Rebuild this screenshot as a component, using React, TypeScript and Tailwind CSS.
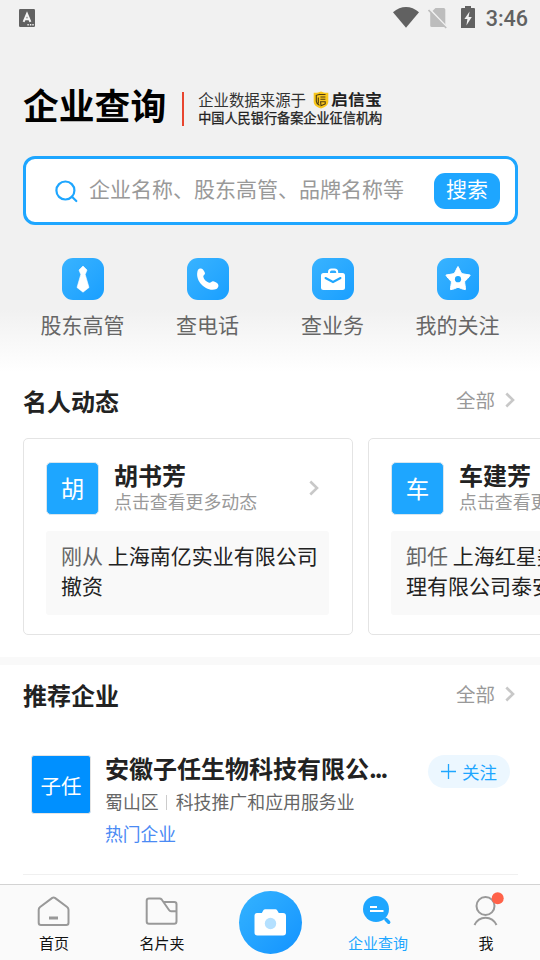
import type { ReactNode } from "react";

const BLUE = "#1ea6ff";

function StatusBar() {
  return (
    <div className="flex h-9 items-start justify-between pl-[19px] pr-3">
      <svg className="mt-[9px]" width="16" height="18" viewBox="0 0 16 18">
        <rect width="16" height="18" rx="1.2" fill="#616161" />
        <path d="M4.6 12.8 8 4.8l3.4 8M5.8 10.2h4.4" fill="none" stroke="#f4f4f4" strokeWidth="2" />
        <path d="M8.4 15h1.4v1.6H8.4zM10.9 15h1.4v1.6h-1.4zM13.3 15h1.4v1.6h-1.4z" fill="#f4f4f4" />
      </svg>
      <div className="flex items-start">
        <svg className="mt-[7px]" width="26" height="21" viewBox="0 0 26 21">
          <path d="M0 5.2C8-1.700 18-1.700 26 5.200L13 20.700z" fill="#616161" />
        </svg>
        <svg className="ml-[9px] mt-[7px]" width="19" height="22" viewBox="0 0 19 22">
          <path d="M7.500 1h8.200a1.600 1.600 0 0 1 1.600 1.600V20H3.800a1.600 1.600 0 0 1-1.600-1.600V6.300z" fill="#bdbdbd" />
          <path d="M1.300 1.900 19 20.400" stroke="#f1f1f1" strokeWidth="2" />
          <path d="M.5 3 18.200 21" stroke="#bdbdbd" strokeWidth="1.700" />
        </svg>
        <svg className="ml-[14px] mt-[6px]" width="14" height="22" viewBox="0 0 14 22">
          <path d="M4 0h6v2h3a1 1 0 0 1 1 1v19H0V3a1 1 0 0 1 1-1h3z" fill="#616161" />
          <path d="M8.600 5.500 3.400 13h3l-1 6.500L10.800 11H7.600z" fill="#f1f1f1" />
        </svg>
        <span className="ml-[11px] mt-[5px] font-['Roboto'] text-[21.5px] font-medium leading-[28px] text-[#616161]">3:46</span>
      </div>
    </div>
  );
}

function Header() {
  return (
    <div className="flex h-[90px] pl-[23px] pt-[50px]">
      <h1 className="text-[35.8px] font-bold leading-[36px] text-black">企业查询</h1>
      <div className="ml-[16px] mt-[6px] h-[34px] w-[2px] bg-[#e8452f]" />
      <div className="ml-[14px] mt-[4px] flex flex-col whitespace-nowrap text-[#222]">
        <div className="flex h-[19px] items-center">
          <span className="w-[115px] text-[15.4px] leading-[19px] text-[#333]">企业数据来源于</span>
          <svg width="16" height="18" viewBox="0 0 16 18">
            <path d="M8 .5c2.500 1.300 5 1.500 7.300 1.200v9c0 3.500-3.500 5.600-7.300 6.900C4.200 16.300.7 14.200.7 10.700v-9C3 2 5.500 1.800 8 .5z" fill="#f9c71c" />
            <path d="M7 3.200 3.300 4.300v6c0 2 1.700 3.200 3.200 4.100M5.300 6.500v6M7 3.500h5.500M7.400 6h5M7.400 8.300h5M7.600 10.700h4.600v2.200L8 14.700z" fill="none" stroke="#4c3b12" strokeWidth="1.100" />
          </svg>
          <span className="-mt-[2px] ml-[2px] origin-left scale-x-[1.13] text-[15px] font-bold leading-[19px]">启信宝</span>
        </div>
        <span className="text-[13.15px] leading-[17px] [-webkit-text-stroke:0.3px_#222]">中国人民银行备案企业征信机构</span>
      </div>
    </div>
  );
}

function SearchBox() {
  return (
    <div className="ml-[23px] mr-[22px] mt-[30px] flex h-[69px] items-center rounded-[12px] border-[3px] border-[#1ea6ff] bg-white pl-[28px] pr-[15px]">
      <svg width="25" height="25" viewBox="0 0 25 25" fill="none" stroke={BLUE} strokeWidth="2.200" strokeLinecap="round">
        <circle cx="11.400" cy="12.500" r="9" />
        <path d="m18 18.800 4.300 4.200" />
      </svg>
      <span className="-mt-[6px] ml-[10px] flex-1 whitespace-nowrap text-[21px] leading-[30px] text-[#999]">企业名称、股东高管、品牌名称等</span>
      <button className="flex h-[36px] w-[66px] justify-center rounded-[11px] bg-[#1ea6ff] text-[21px] leading-[30px] text-white">搜索</button>
    </div>
  );
}

function Shortcut({ label, children }: { label: string; children: ReactNode }) {
  return (
    <div className="flex w-[125px] flex-col items-center">
      <div className="h-[42px] w-[42px] rounded-[11px] bg-gradient-to-br from-[#38b3ff] to-[#189fff]">
        <svg width="42" height="42" viewBox="0 0 42 42">{children}</svg>
      </div>
      <span className="mt-[9px] text-[21px] leading-[30px] text-[#666]">{label}</span>
    </div>
  );
}

function Shortcuts() {
  return (
    <div className="mt-[33px] flex px-5">
      <Shortcut label="股东高管">
        <path d="m21 8 4 4-1.800 4.500L27 29.500 21 34.200l-6-4.700 3.800-13L17 12z" fill="#fff" stroke="#fff" strokeWidth=".6" strokeLinejoin="round" />
      </Shortcut>
      <Shortcut label="查电话">
        <path d="M11 11.800c1.400-1.800 4-1.700 4.900-.3 1 1.400 2 3 2.100 3.800.1 1.400-2 2-1.700 3.500.5 2.600 3 5.300 5.800 5.900 1.900.4 2.400-1.600 3.900-1.500 1.400.1 2.900 1 4.300 2.100 1.900 1.500 1.300 4.700-.9 5.700C20.500 35 6.500 23.300 11 11.800z" fill="#fff" />
      </Shortcut>
      <Shortcut label="查业务">
        <path d="M17 15.500v-1.300c0-2 1-2.700 2.500-2.700h3c1.700 0 2.700.7 2.700 2.700v1.300" fill="none" stroke="#fff" strokeWidth="2" />
        <rect x="9" y="15" width="24" height="17" rx="2.500" fill="#fff" />
        <path d="m13.500 20 7.500 4 7.500-4" fill="none" stroke={BLUE} strokeWidth="2" strokeLinecap="round" />
      </Shortcut>
      <Shortcut label="我的关注">
        <path d="M21 8.500c1 1.500 2.300 5 3.800 7.100 2.700.8 5.800.8 8.400 1.500-.8 2.100-4 4.600-5.600 6.600.1 2.600 1.100 5.600.8 7.900-2.400 0-5-1.600-7.400-2.300-2.500.7-5 2.400-7.500 2.300-.2-2.500.9-5.400.9-7.900-1.700-2.100-4.600-4.500-5.500-6.600 2.500-.8 5.500-.6 8.200-1.500 1.600-2.100 2.500-5.300 3.900-7.100z" fill="#fff" stroke="#fff" strokeLinejoin="round" />
        <circle cx="21" cy="21.200" r="3.100" fill={BLUE} />
      </Shortcut>
    </div>
  );
}

function Chevron() {
  return (
    <svg width="10" height="16" viewBox="0 0 10 16" fill="none" stroke="#c8c8c8" strokeWidth="2.600">
      <path d="m1.300 1.500 6.700 6.500-6.700 6.500" />
    </svg>
  );
}

function SectionTitle({ title }: { title: string }) {
  return (
    <div className="flex h-[32px] items-center pl-[23px] pr-[25px]">
      <h2 className="flex-1 text-[24px] font-bold leading-[32px] text-[#222]">{title}</h2>
      <span className="mr-[10px] mt-[-2px] text-[19.5px] leading-[28px] text-[#999]">全部</span>
      <div className="-mt-[3px]"><Chevron /></div>
    </div>
  );
}

function PersonCard({ name, action, first, second }: { name: string; action: string; first: string; second: string }) {
  return (
    <div className="h-[197px] w-[330px] shrink-0 rounded-[5px] border border-[#e4e4e4] bg-white px-[22px] pt-[23px]">
      <div className="flex h-[54px] items-start">
        <div className="flex h-[53px] w-[53px] justify-center rounded-[5px] border border-[#d8e6ee] bg-[#1ea6ff] text-[23.5px] leading-[51px] text-white">{name[0]}</div>
        <div className="-mt-px ml-[15px] flex flex-1 flex-col whitespace-nowrap">
          <span className="text-[24px] font-bold leading-[28px] text-[#222]">{name}</span>
          <span className="text-[17.9px] leading-[24px] text-[#999]">点击查看更多动态</span>
        </div>
        <div className="mr-[11px] mt-[18px]"><Chevron /></div>
      </div>
      <div className="mt-[15px] h-[84px] w-[283px] rounded-[3px] bg-[#f9f9f9] pl-[15px] pt-[9px] text-[21px] leading-[30px] text-[#222]">
        <p className="whitespace-nowrap"><span className="text-[#666]">{action}</span> {first}</p>
        <p className="whitespace-nowrap">{second}</p>
      </div>
    </div>
  );
}

function CompanyRow() {
  return (
    <div className="ml-[23px] mr-[22px] mt-[43px] flex h-[121px] border-b border-[#f0f0f0] pl-[8px] pr-[8px]">
      <div className="mt-px flex h-[59px] w-[60px] justify-center rounded-[3px] border border-[#e4e4e4] bg-[#0090ff] text-[20.5px] leading-[58px] text-white">子任</div>
      <div className="ml-[14px] flex flex-1 flex-col whitespace-nowrap">
        <span className="text-[24px] font-bold leading-[28px] text-[#222]">安徽子任生物科技有限公<span className="tracking-[-2px]">...</span></span>
        <div className="mt-[7px] flex h-[24px] items-center text-[17.9px] leading-[24px] text-[#666]">
          <span>蜀山区</span>
          <span className="ml-[7px] mr-[9px] mt-[2px] h-[15px] w-px bg-[#ccc]" />
          <span>科技推广和应用服务业</span>
        </div>
        <span className="mt-[8px] text-[17.8px] leading-[24px] text-[#4a8af4]">热门企业</span>
      </div>
      <button className="mt-px flex h-[33px] w-[82px] items-center rounded-full bg-[#ecf7ff] pl-[13px] text-[17.5px] leading-[32px] text-[#1ea6ff]">
        <svg width="15" height="15" viewBox="0 0 15 15"><path d="M7.500 0v15M0 7.500h15" stroke={BLUE} strokeWidth="1.300" /></svg>
        <span className="ml-[6px]">关注</span>
      </button>
    </div>
  );
}

function Tab({ label, active = false, children }: { label: string; active?: boolean; children: ReactNode }) {
  return (
    <div className="flex w-[108px] flex-col items-center">
      <svg className="mt-[6px]" width="40" height="40" viewBox="0 0 40 40" fill="none" stroke="#999" strokeWidth="2">{children}</svg>
      <span className={`mt-[1px] text-[15px] leading-[22px] ${active ? "text-[#1ea6ff]" : "text-[#111]"}`}>{label}</span>
    </div>
  );
}

function TabBar() {
  return (
    <nav className="mt-auto flex h-[76px] shrink-0 border-t border-[#d3d3d3] bg-[#fafafa]">
      <Tab label="首页">
        <path d="M18.300 6.900c.8-.6 1.800-.6 2.600 0l12.200 9.100c1 .8 1.400 1.500 1.400 2.700v13c0 1.400-.9 2.300-2.300 2.300H7c-1.400 0-2.300-.9-2.300-2.300v-13c0-1.200.4-1.900 1.400-2.700z" />
        <path d="M15 27h9" strokeWidth="3" />
      </Tab>
      <Tab label="名片夹">
        <path d="M7 7.500h10.500c1 0 1.600.3 2.200 1l7.300 10.500c.6.900 1 1.200 2 1.200h5.500M21 11h11.200c1.500 0 2.300.9 2.300 2.300v17c0 1.600-.8 2.500-2.300 2.500H7c-1.500 0-2.300-.9-2.300-2.300V9.800C4.700 8.400 5.500 7.500 7 7.500" />
      </Tab>
      <div className="flex w-[108px] justify-center pt-[6px]">
        <div className="h-[63px] w-[63px] rounded-full bg-gradient-to-br from-[#34b3ff] to-[#1293ff]">
          <svg width="63" height="63" viewBox="0 0 63 63">
            <path d="M18 22h4.500c1 0 1.500-3.800 3.500-3.800h10.500c2 0 2.700 3.800 3.700 3.800H44c2 0 3 1 3 3v16.500c0 2-1 3-3 3H18.500c-2 0-3-1-3-3V25c0-2 1-3 2.500-3z" fill="#fff" />
            <circle cx="31.500" cy="32.500" r="5.700" fill="#b4e0ff" />
          </svg>
        </div>
      </div>
      <Tab label="企业查询" active>
        <circle cx="18" cy="18" r="13" fill={BLUE} stroke="none" />
        <path d="M12 16h7M12 20h13.500" stroke="#fff" />
        <path d="m28 28.500 2.700 2.700" stroke={BLUE} strokeWidth="3.500" strokeLinecap="round" />
      </Tab>
      <Tab label="我">
        <circle cx="19.500" cy="15" r="9" />
        <path d="M8.500 34c4.500-9.800 17.500-9.800 22 0" />
        <circle cx="31.700" cy="7.200" r="6" fill="#ff6249" stroke="none" />
      </Tab>
    </nav>
  );
}

export default function App() {
  return (
    <div className="flex h-[960px] w-[540px] flex-col overflow-hidden bg-white font-['Noto_Sans_CJK_SC',sans-serif]">
      <div className="h-[372px] shrink-0 bg-[linear-gradient(to_bottom,#f1f1f1_310px,#ffffff_372px)]">
        <StatusBar />
        <Header />
        <SearchBox />
        <Shortcuts />
      </div>
      <section className="h-[285px] shrink-0 pt-[13px]">
        <SectionTitle title="名人动态" />
        <div className="mt-[21px] flex gap-[15px] pl-[23px]">
          <PersonCard name="胡书芳" action="刚从" first="上海南亿实业有限公司" second="撤资" />
          <PersonCard name="车建芳" action="卸任" first="上海红星美凯龙品牌管" second="理有限公司泰安分公司" />
        </div>
      </section>
      <div className="h-2 shrink-0 bg-[#f9f9f9]" />
      <section className="pt-[14px]">
        <SectionTitle title="推荐企业" />
        <CompanyRow />
      </section>
      <TabBar />
    </div>
  );
}
